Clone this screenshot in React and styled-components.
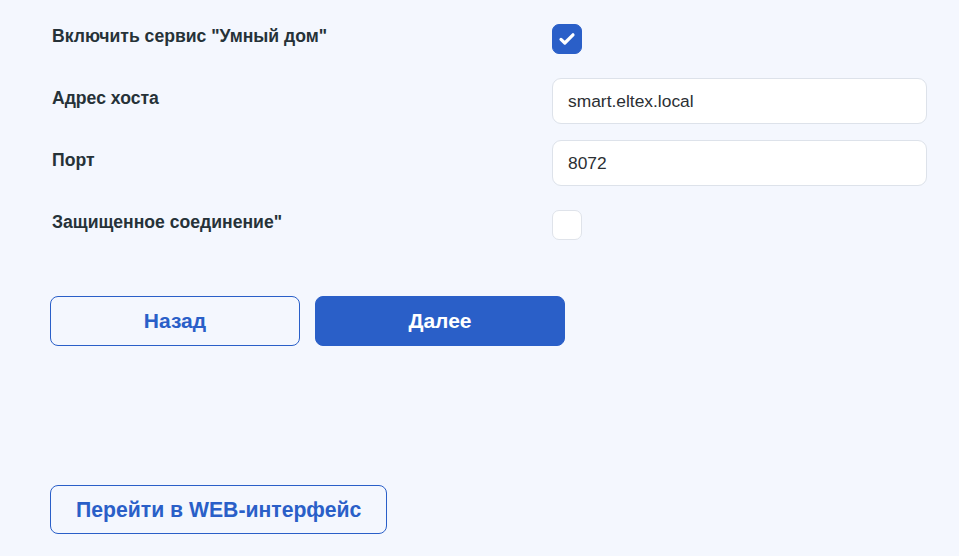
import styled, { createGlobalStyle } from "styled-components"
import { useState } from "react"

const GlobalStyle = createGlobalStyle`
  html, body {
    margin: 0;
    background: #f4f7fe;
    font-family: "Liberation Sans", Arial, sans-serif;
  }
`

function Tick() {
    return (
        <svg width="20" height="20" viewBox="0 0 20 20">
            <path d="M4 10.4l3.8 3.6L16 5.8" fill="none" stroke="#fff" strokeWidth="3.2" strokeLinecap="round" strokeLinejoin="round" />
        </svg>
    )
}

export default function App() {
    const [enabled, setEnabled] = useState(true)
    const [secure, setSecure] = useState(false)
    const [host, setHost] = useState("smart.eltex.local")
    const [port, setPort] = useState("8072")

    return (
        <Page>
            <GlobalStyle />
            <Form>
                <Row>
                    <Label>Включить сервис "Умный дом"</Label>
                    <Check checked={enabled} onClick={() => setEnabled(!enabled)}>
                        {enabled && <Tick />}
                    </Check>
                </Row>
                <Row>
                    <Label>Адрес хоста</Label>
                    <Input value={host} onChange={(e) => setHost(e.target.value)} />
                </Row>
                <Row>
                    <Label>Порт</Label>
                    <Input value={port} onChange={(e) => setPort(e.target.value)} />
                </Row>
                <Row>
                    <Label>Защищенное соединение"</Label>
                    <Check checked={secure} onClick={() => setSecure(!secure)}>
                        {secure && <Tick />}
                    </Check>
                </Row>
            </Form>
            <Buttons>
                <Button>Назад</Button>
                <Button primary>Далее</Button>
            </Buttons>
            <WebButton>Перейти в WEB-интерфейс</WebButton>
        </Page>
    )
}

const Page = styled.div`
padding: 16px 32px 0 50px;
display: flex;
flex-direction: column;
align-items: flex-start;
`

const Form = styled.div`
display: flex;
flex-direction: column;
gap: 16px;
width: 877px;
`

const Row = styled.div`
display: grid;
grid-template-columns: 502px 375px;
align-items: center;
height: 46px;
`

const Label = styled.div`
padding-left: 2px;
padding-bottom: 6px;
font-size: 17.6px;
font-weight: 700;
line-height: 20px;
color: #263238;
`

const Check = styled.div`
width: 30px;
height: 30px;
box-sizing: border-box;
border-radius: 7px;
background: ${(p) => (p.checked ? "#2a5fc8" : "#ffffff")};
border: 1px solid ${(p) => (p.checked ? "#2a5fc8" : "#dfe3ea")};
display: flex;
align-items: center;
justify-content: center;
cursor: pointer;
`

const Input = styled.input`
width: 375px;
height: 46px;
box-sizing: border-box;
border: 1px solid #dde2ea;
border-radius: 9px;
background: #ffffff;
padding: 0 15px;
font-family: "Liberation Sans", Arial, sans-serif;
font-size: 17.4px;
color: #2b2f33;
outline: none;
`

const Buttons = styled.div`
display: flex;
gap: 15px;
margin-top: 48px;
`

const Button = styled.button`
width: 250px;
height: 50px;
box-sizing: border-box;
border-radius: 8px;
border: 1px solid #2a5fc8;
background: ${(p) => (p.primary ? "#2a5fc8" : "transparent")};
color: ${(p) => (p.primary ? "#ffffff" : "#2a5fc8")};
font-family: "Liberation Sans", Arial, sans-serif;
font-size: 21px;
font-weight: 700;
cursor: pointer;
`

const WebButton = styled.button`
margin-top: 139px;
height: 49px;
box-sizing: border-box;
padding: 0 25px;
border-radius: 8px;
border: 1px solid #2a5fc8;
background: transparent;
color: #2a5fc8;
font-family: "Liberation Sans", Arial, sans-serif;
font-size: 21.2px;
font-weight: 700;
cursor: pointer;
`
